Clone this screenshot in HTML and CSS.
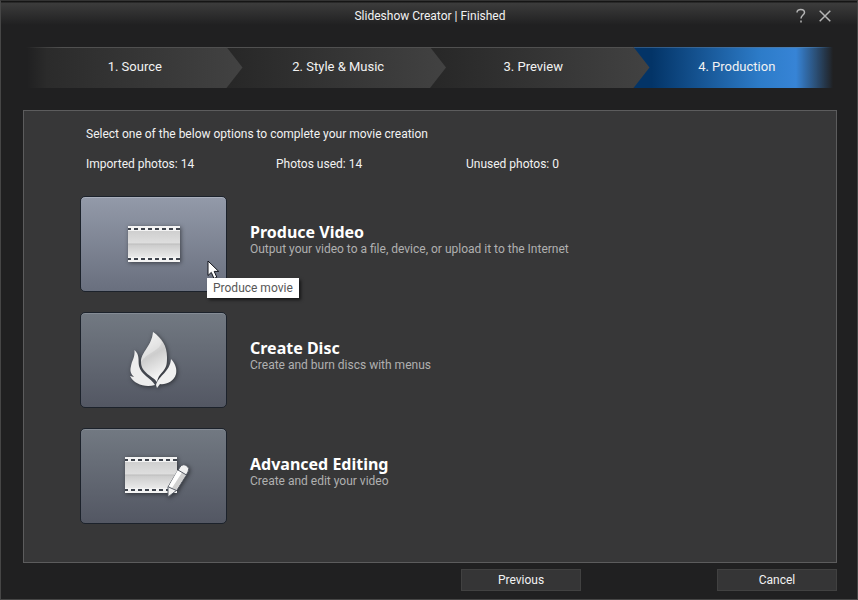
FILE: index.html
```html
<!DOCTYPE html>
<html lang="en">
<head>
  <meta charset="utf-8">
  <title>Slideshow Creator | Finished</title>
  <link rel="stylesheet" href="styles.css">
</head>
<body>

<div class="window">

  <!-- TITLE BAR -->
  <header class="titlebar">
    <h1>Slideshow Creator | Finished</h1>
    <div class="window-buttons">
      <button type="button" aria-label="Help">
        <svg width="12" height="16" viewBox="0 0 12 16"><path d="M2 4.5C2 0.3 9.5 0.5 9.5 4.5C9.5 7 6 7.2 6 10.5M6 12.5V14.5"/></svg>
      </button>
      <button type="button" aria-label="Close">
        <svg width="12" height="12" viewBox="0 0 12 12"><path d="M0.7 0.7L11.3 11.3M11.3 0.7L0.7 11.3"/></svg>
      </button>
    </div>
  </header>

  <!-- STEPS -->
  <ol class="steps">
    <li class="step done">1. Source</li>
    <li class="step done">2. Style &amp; Music</li>
    <li class="step">3. Preview</li>
    <li class="step current" aria-current="step">4. Production</li>
  </ol>

  <!-- MAIN CONTENT -->
  <main class="panel">
    <p class="intro">Select one of the below options to complete your movie creation</p>
    <ul class="stats">
      <li>Imported photos: 14</li>
      <li>Photos used: 14</li>
      <li>Unused photos: 0</li>
    </ul>

    <div class="option">
      <button type="button" class="tile active" aria-labelledby="produceTitle">
        <svg width="76" height="64" viewBox="0 0 76 64">
          <defs>
            <linearGradient id="film" x1="0" y1="0" x2="0" y2="1">
              <stop offset="0" stop-color="#cfcfcf"/>
              <stop offset="0.46" stop-color="#dedede"/>
              <stop offset="0.5" stop-color="#bdbdbd"/>
              <stop offset="0.54" stop-color="#cccccc"/>
              <stop offset="1" stop-color="#e9e9e9"/>
            </linearGradient>
          </defs>
          <rect x="12" y="14" width="52" height="36" fill="#f3f3f3"/>
          <rect x="12" y="19" width="52" height="26" fill="url(#film)"/>
          <path class="holes" d="M12 17H64M12 47H64"/>
        </svg>
      </button>
      <div class="option-text">
        <h2 id="produceTitle">Produce Video</h2>
        <p>Output your video to a file, device, or upload it to the Internet</p>
      </div>
      <svg class="cursor" width="14" height="20" viewBox="0 0 14 20"><path d="M1 1V15.5L4.3 12.4L7 18.5L9.8 17.2L7.2 11.4H11.7Z"/></svg>
      <div class="tooltip" role="tooltip">Produce movie</div>
    </div>

    <div class="option">
      <button type="button" class="tile" aria-labelledby="discTitle">
        <svg width="76" height="64" viewBox="0 0 76 64">
          <defs>
            <linearGradient id="flame" x1="0" y1="0" x2="0.3" y2="1">
              <stop offset="0" stop-color="#f6f6f6"/>
              <stop offset="0.55" stop-color="#cdcdcd"/>
              <stop offset="1" stop-color="#f4f4f4"/>
            </linearGradient>
          </defs>
          <path d="M37 4C46 10 51 18 51 29C51 34 51 38 48 42C45 46 42 48 41 54C37 48 25 45 25 34C25 24 36 18 37 4Z" fill="url(#flame)"/>
          <path d="M37 4C36 18 25 24 25 34C31 24 43 24 46 14C43 10 41 7 37 4Z" fill="#ffffff" opacity="0.3"/>
          <path d="M18.500 22C24 27 22 32 23 38C25 47 35 50 39 57C29 60 18 56 14 48L18 49C14 45 14 42 15 38C16 32 19 30 18.500 22Z" fill="#ededed"/>
          <path d="M55 31C60 36 61 42 60 46C58 54 49 57 44 56L41 60L40 57C43 47 54 44 55 31Z" fill="#f0f0f0"/>
        </svg>
      </button>
      <div class="option-text">
        <h2 id="discTitle">Create Disc</h2>
        <p>Create and burn discs with menus</p>
      </div>
    </div>

    <div class="option">
      <button type="button" class="tile" aria-labelledby="editTitle">
        <svg width="76" height="64" viewBox="0 0 76 64">
          <rect x="9" y="13" width="52" height="36" fill="#f3f3f3"/>
          <rect x="9" y="18" width="52" height="26" fill="url(#film)"/>
          <path class="holes" d="M9 16H61M9 46H61"/>
          <g stroke="#555a64" stroke-width="1" stroke-linejoin="round">
            <path d="M64 23Q67 19 71 22Q74 24 72 28L61 46L52 53L52 43Z" fill="#f1f1f1"/>
            <path d="M62 26L70 31L60 46L53 42Z" fill="#d0d0d0" stroke="none"/>
            <path d="M62 26L66 28.500L56 44L53 42Z" fill="#ffffff" stroke="none"/>
            <path d="M62 26L70.500 31M52.500 43L60.500 46.500" fill="none"/>
          </g>
        </svg>
      </button>
      <div class="option-text">
        <h2 id="editTitle">Advanced Editing</h2>
        <p>Create and edit your video</p>
      </div>
    </div>
  </main>

  <!-- BOTTOM BUTTONS -->
  <footer class="actions">
    <button type="button">Previous</button>
    <button type="button">Cancel</button>
  </footer>

</div>

</body>
</html>
```
FILE: styles.css
```css
* {
  box-sizing: border-box;
}
body {
  margin: 0;
  background: #202021;
  color: #f2f2f2;
  font-family: Roboto, 'Noto Sans', sans-serif;
  font-size: 12px;
  line-height: 16px;
}
h1, h2, p, ul, ol {
  margin: 0;
  padding: 0;
  font-weight: normal;
}
ul, ol {
  list-style: none;
}
button {
  padding: 0;
  border: none;
  background: none;
  color: inherit;
  font: inherit;
  cursor: pointer;
}
.window {
  display: flex;
  flex-direction: column;
  min-height: 100vh;
  padding: 0 20px 8px 22px;
  border: 1px solid #464646;
  border-top-color: #333333;
  background: linear-gradient(#151515 1px, #3c3c3c 2px, #202021 24px);
}

/* title bar */
.titlebar {
  display: grid;
  grid-template-columns: 1fr auto 1fr;
  align-items: center;
  height: 30px;
  margin-bottom: 16px;
}
.titlebar h1 {
  grid-column: 2;
  font-size: 12px;
}
.window-buttons {
  display: flex;
  align-items: center;
  justify-content: flex-end;
  gap: 12px;
  padding-right: 6px;
}
.window-buttons button {
  display: flex;
}
.window-buttons path {
  fill: none;
  stroke: #b5b5b5;
  stroke-width: 1.5;
}

/* steps */
.steps {
  display: grid;
  grid-template-columns: repeat(4, 1fr);
  height: 41px;
  margin-bottom: 22px;
  font-size: 13px;
}
.step {
  position: relative;
  z-index: 1;
  display: flex;
  align-items: center;
  justify-content: center;
  margin-right: -16px;
  padding: 0 16px 3px 3px;
  border-top: 1px solid #505050;
  background: linear-gradient(to right, #272727, #424242);
  clip-path: polygon(0 0, calc(100% - 16px) 0, 100% 50%, calc(100% - 16px) 100%, 0 100%);
}
.step.done {
  z-index: 2;
  padding-left: 20px;
}
.step:first-child {
  z-index: 3;
  border-image: linear-gradient(to right, transparent 4px, #505050 40px) 1;
  background: linear-gradient(to right, #202021 4px, #2b2b2b 24px, #424242);
}
.step.current {
  z-index: 0;
  border-image: linear-gradient(to right, #2d5580, #4b80b5 75%, transparent 90%) 1;
  background: linear-gradient(to right, #033467 8%, #2d7cc9 58%, #3784d6 74%, transparent 91%);
}

/* main panel */
.panel {
  flex: 1;
  padding: 15px 56px;
  border: 1px solid #5c5c5d;
  background: #373738;
}
.intro, .stats {
  padding-left: 6px;
}
.intro {
  margin-bottom: 14px;
}
.stats {
  display: grid;
  grid-template-columns: repeat(3, 190px);
  margin-bottom: 24px;
}
.option {
  position: relative;
  display: flex;
  align-items: center;
  gap: 23px;
  margin-bottom: 20px;
}
.tile {
  display: flex;
  flex: none;
  align-items: center;
  justify-content: center;
  width: 147px;
  height: 96px;
  border: 1px solid #1c222b;
  border-radius: 5px;
  background: linear-gradient(#727982, #535763);
  box-shadow: inset 0 1px #858c95;
}
.tile.active {
  background: linear-gradient(#939aa9, #696f7e);
  box-shadow: inset 0 1px #a9afbc;
}
.tile svg {
  filter: drop-shadow(1px 1px 2px rgba(0,0,0,0.5));
}
.holes {
  fill: none;
  stroke: #3e434c;
  stroke-width: 2;
  stroke-dasharray: 4 3;
  stroke-dashoffset: 1;
}
.option-text {
  padding-bottom: 10px;
}
.option-text h2 {
  font-family: 'Noto Sans', sans-serif;
  font-size: 16px;
  font-weight: bold;
  line-height: 20px;
  color: #ffffff;
}
.option-text p {
  line-height: 14px;
  color: #b0b0b0;
}
.cursor {
  position: absolute;
  top: 64px;
  left: 127px;
}
.cursor path {
  fill: #ffffff;
  stroke: #10131a;
}
.tooltip {
  position: absolute;
  top: 82px;
  left: 127px;
  padding: 2px 6px;
  background: #ffffff;
  color: #575757;
  box-shadow: 2px 2px 3px rgba(0,0,0,0.6);
}

/* bottom buttons */
.actions {
  display: flex;
  justify-content: flex-end;
  gap: 136px;
  padding-top: 6px;
}
.actions button {
  width: 120px;
  height: 22px;
  border: 1px solid #414141;
  background: #353536;
}
.actions button:hover {
  background: #414142;
}
```
